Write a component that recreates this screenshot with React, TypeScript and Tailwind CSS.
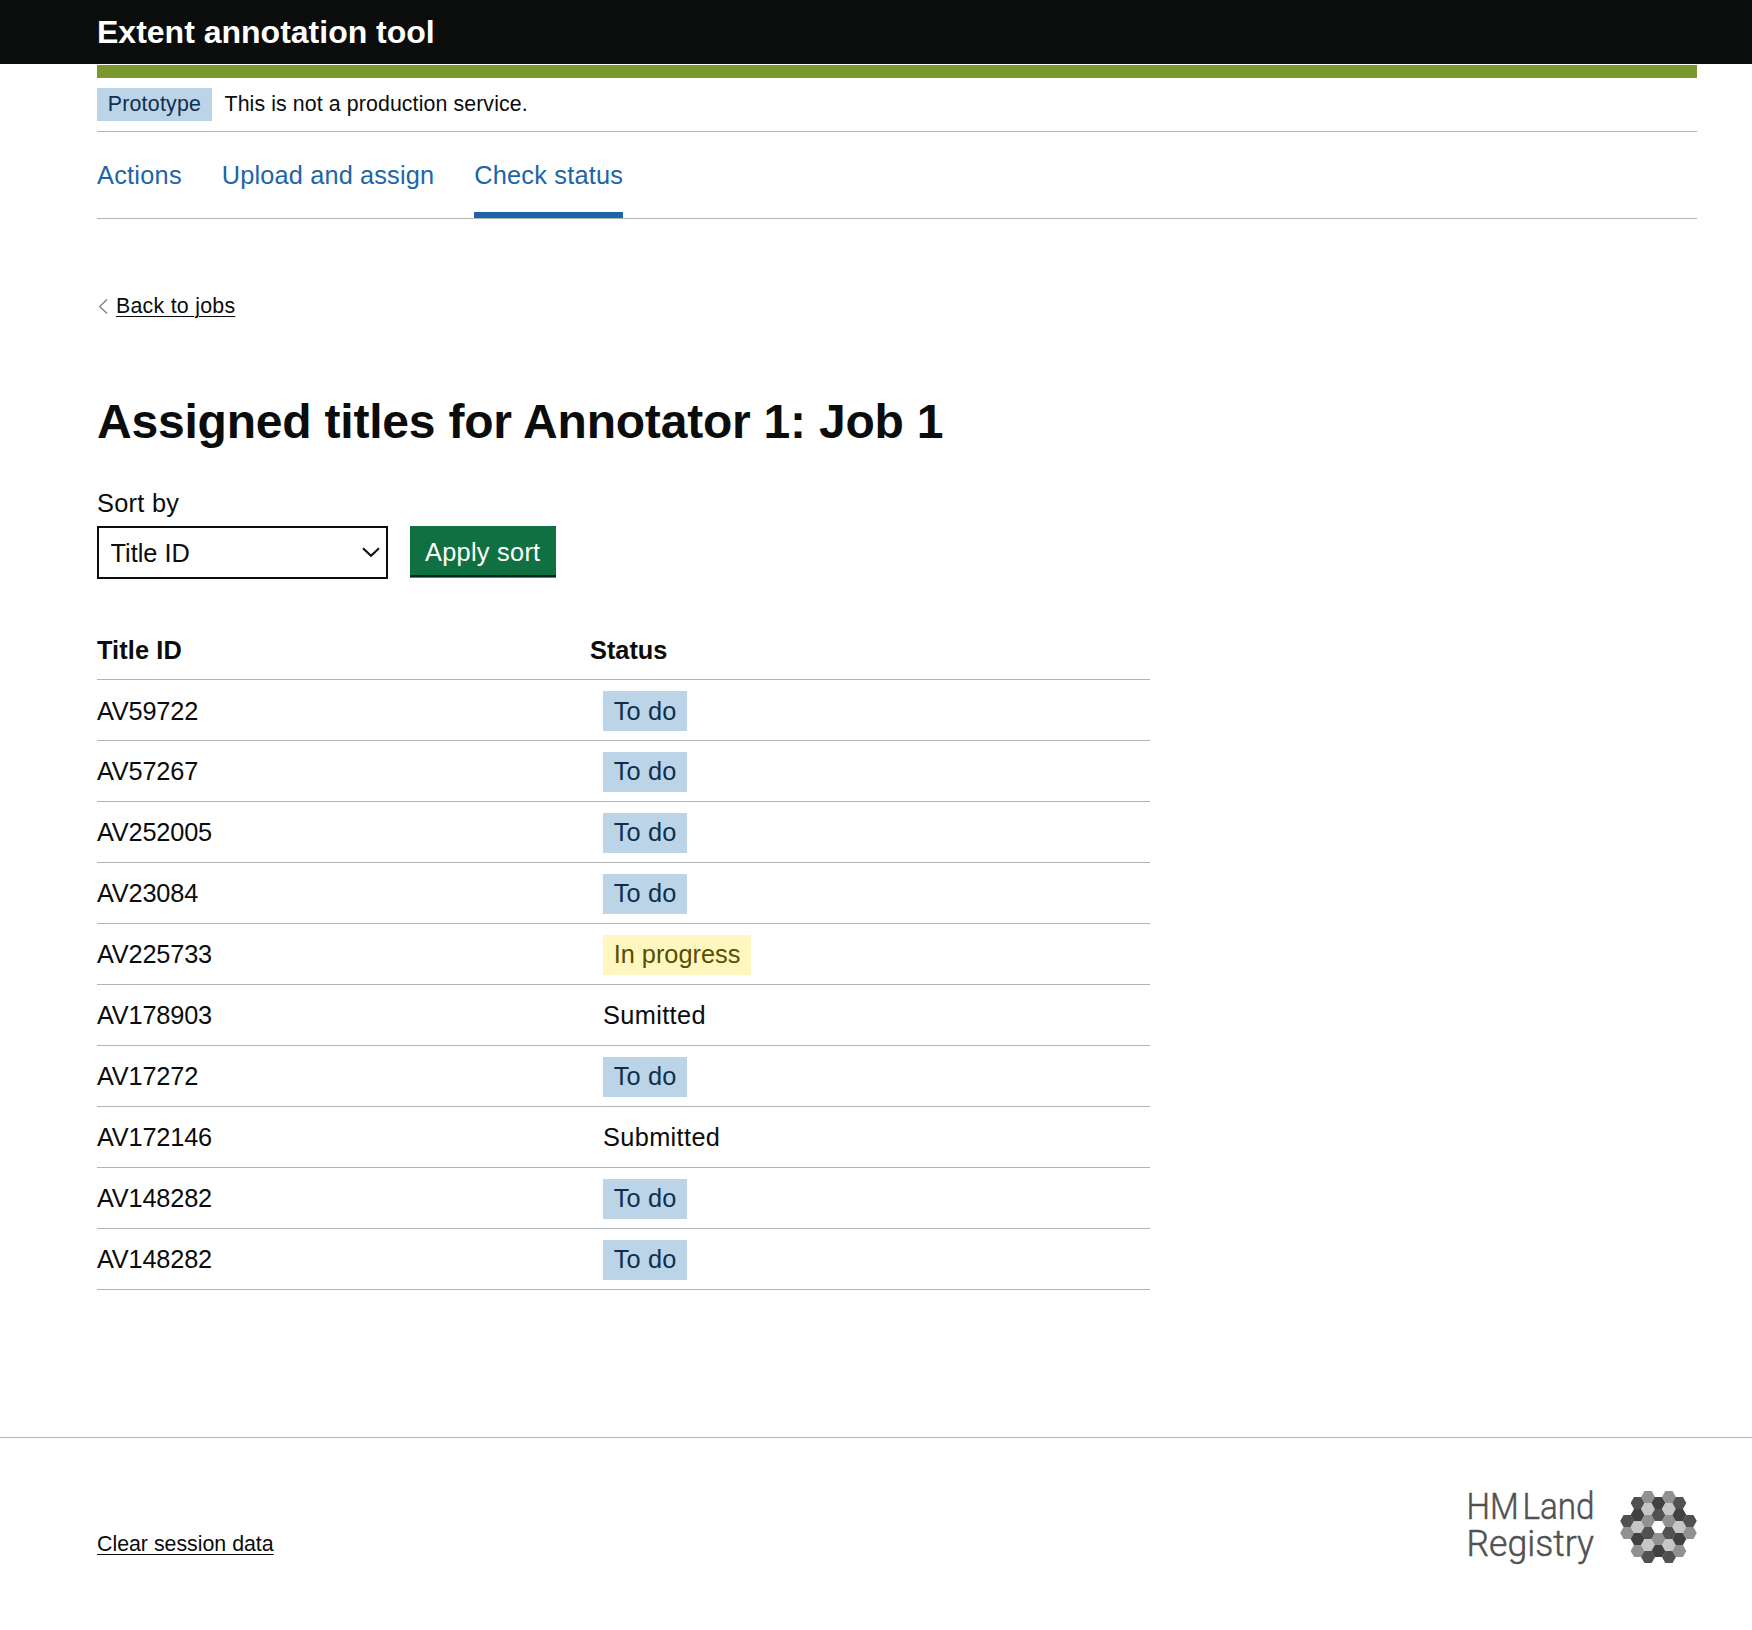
const NAV = [
  { label: "Actions", className: "tracking-[0.25px] border-transparent" },
  { label: "Upload and assign", className: "tracking-[0.15px] border-transparent" },
  { label: "Check status", className: "tracking-[0.21px] border-[#1d65a6]" },
];

const ROWS: { id: string; status: string }[] = [
  { id: "AV59722", status: "To do" },
  { id: "AV57267", status: "To do" },
  { id: "AV252005", status: "To do" },
  { id: "AV23084", status: "To do" },
  { id: "AV225733", status: "In progress" },
  { id: "AV178903", status: "Sumitted" },
  { id: "AV17272", status: "To do" },
  { id: "AV172146", status: "Submitted" },
  { id: "AV148282", status: "To do" },
  { id: "AV148282", status: "To do" },
];

const DARKER = "#414141";
const DARK = "#515151";
const MID = "#919191";
const LIGHT = "#c6c6c6";

// Each column: y of the first cell's centre, then fills from top to bottom.
const OUTER = { y: 30.1, fills: [DARK, MID] };
const SECOND = { y: 12.1, fills: [DARK, DARKER, LIGHT, DARKER, MID] };
const THIRD = { y: 6.1, fills: [MID, LIGHT, MID, DARK, LIGHT, DARK] };
const CENTRE = { y: 12.1, fills: [DARKER, DARK, "#ffffff", MID, DARKER] };
const COLUMNS = [OUTER, SECOND, THIRD, CENTRE, THIRD, SECOND, OUTER];

function hexagon(cx: number, cy: number) {
  return [
    [cx - 7, cy],
    [cx - 3.6, cy - 6.05],
    [cx + 3.6, cy - 6.05],
    [cx + 7, cy],
    [cx + 3.6, cy + 6.05],
    [cx - 3.6, cy + 6.05],
  ]
    .map((p) => p.join(","))
    .join(" ");
}

function Logo() {
  return (
    <svg className="overflow-visible" width="232" height="80" viewBox="0 0 232 80" role="img" aria-label="HM Land Registry">
      <g fill="#515151" stroke="#515151" strokeWidth="0.5" fontFamily="Roboto, sans-serif" fontWeight="300" fontSize="37.5">
        <text x="-0.5" y="29" textLength="128" lengthAdjust="spacingAndGlyphs" wordSpacing="-5">
          HM Land
        </text>
        <text x="-0.5" y="66" textLength="127.5" lengthAdjust="spacingAndGlyphs">
          Registry
        </text>
      </g>
      <g transform="translate(153 0.9)">
        {COLUMNS.map((column, c) =>
          column.fills.map((fill, r) => (
            <polygon key={`${c}-${r}`} points={hexagon(7.2 + c * 10.43, column.y + r * 12)} fill={fill} />
          )),
        )}
      </g>
    </svg>
  );
}

function Status({ value, first }: { value: string; first: boolean }) {
  const text = first ? "pb-0" : "pb-[2px]";
  if (value === "To do") {
    return (
      <span className={`flex h-10 w-[84px] items-center bg-[#bbd4e8] pl-[10.67px] tracking-[0.2px] text-[#0f2f4f] ${text}`}>
        {value}
      </span>
    );
  }
  if (value === "In progress") {
    return (
      <span className={`flex h-10 w-[148px] items-center bg-[#fff7bf] pl-[10.67px] text-[#594d00] ${text}`}>{value}</span>
    );
  }
  return <span className={`flex h-10 items-center tracking-[0.36px] ${text}`}>{value}</span>;
}

export default function App() {
  return (
    <div className="flex min-h-[1630px] flex-col whitespace-nowrap bg-white font-['Liberation_Sans',Arial,sans-serif] text-[25.333px] leading-8 text-[#0b0c0c]">
      <header className="flex h-16 items-center bg-[#0b0c0c] pl-[97px] text-[32px] font-bold text-white">
        Extent annotation tool
      </header>

      <div className="mt-px mr-[55px] ml-[97px]">
        <div className="h-[13px] bg-[#7b982c]" />
        <div className="flex h-[54px] items-center border-b border-[#b1b4b6] text-[21.333px]">
          <strong className="flex h-[33px] w-[115px] items-center bg-[#bbd4e8] pb-px pl-[10.67px] font-normal tracking-[0.25px] text-[#0f2f4f]">
            Prototype
          </strong>
          <span className="ml-[12.5px] pb-px tracking-[0.1px]">This is not a production service.</span>
        </div>
        <nav className="flex h-[87px] gap-10 border-b border-[#b1b4b6] text-[#1d65a6]">
          {NAV.map((item) => (
            <a key={item.label} href="#" className={`flex items-center border-b-[6px] pt-[6px] ${item.className}`}>
              {item.label}
            </a>
          ))}
        </nav>
      </div>

      <main className="ml-[97px] w-[1053px]">
        <div className="mt-[71px] flex h-8 items-center text-[21.333px]">
          <svg width="19" height="16" viewBox="0 0 19 16" fill="none" stroke="#6f777b" strokeWidth="1.1">
            <path d="M10 1.5 2.6 8.5 10 15.5" />
          </svg>
          <a href="#" className="tracking-[0.26px] underline decoration-1 underline-offset-[3px]">
            Back to jobs
          </a>
        </div>

        <h1 className="mt-[72px] text-[48px] leading-[56px] font-bold tracking-[-0.21px]">
          Assigned titles for Annotator 1: Job 1
        </h1>

        <label htmlFor="sort" className="mt-[37px] block tracking-[0.3px]">
          Sort by
        </label>
        <div className="mt-[7px] flex items-start gap-[22px]">
          <div className="relative">
            <select
              id="sort"
              className="block h-[53px] w-[291px] appearance-none rounded-none border-2 border-[#0b0c0c] bg-white pl-[11.5px] text-[25.333px] leading-8"
            >
              <option>Title ID</option>
            </select>
            <svg
              className="pointer-events-none absolute top-[20px] right-[7px]"
              width="20"
              height="12"
              viewBox="0 0 20 12"
              fill="none"
              stroke="#0b0c0c"
              strokeWidth="2"
            >
              <path d="M2 2.2 10 9.8 18 2.2" />
            </svg>
          </div>
          <button
            type="button"
            className="flex h-[52px] w-[146px] items-center border-b border-[#5f7f70] bg-[#117042] pl-[15px] tracking-[0.28px] text-white shadow-[inset_0_-2px_0_#04281a]"
          >
            Apply sort
          </button>
        </div>

        <div className="mt-[54px]">
          <div className="flex h-[47px] border-b border-[#b1b4b6] pt-px font-bold">
            <span className="w-[493px] tracking-[0.1px]">Title ID</span>
            <span>Status</span>
          </div>
          {ROWS.map((row, i) => (
            <div key={i} className="flex h-[61px] border-b border-[#b1b4b6] pt-[11px]">
              <span className={`flex h-10 w-[506px] items-center tracking-[-0.18px] ${i === 0 ? "pb-0" : "pb-[2px]"}`}>
                {row.id}
              </span>
              <Status value={row.status} first={i === 0} />
            </div>
          ))}
        </div>
      </main>

      <footer className="mt-[147px] flex items-start justify-between border-t border-[#b1b4b6] pr-[53px] pl-[97px]">
        <a href="#" className="mt-[90px] text-[21.333px] underline decoration-1 underline-offset-[3px]">
          Clear session data
        </a>
        <div className="mt-[52px]">
          <Logo />
        </div>
      </footer>
    </div>
  );
}
